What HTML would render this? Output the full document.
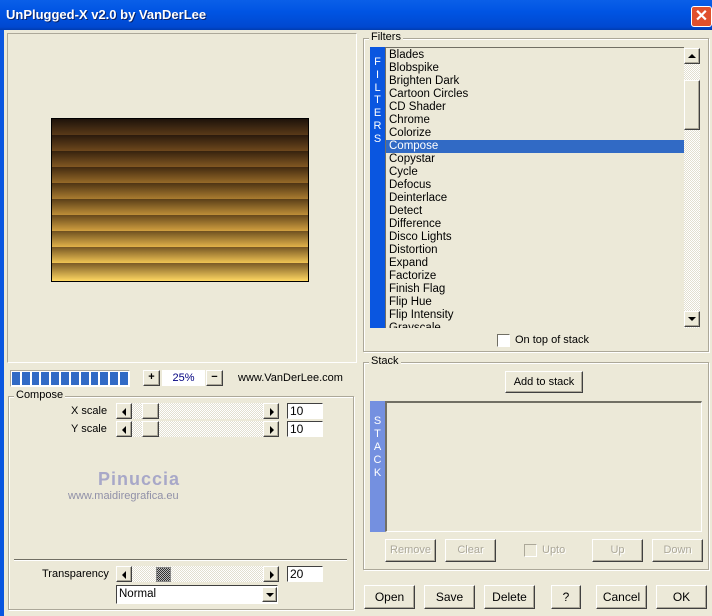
<!DOCTYPE html>
<html><head><meta charset="utf-8"><style>
*{margin:0;padding:0;box-sizing:border-box}
body{width:712px;height:616px;background:#ece9d8;font:11px "Liberation Sans",sans-serif;color:#000;position:relative;overflow:hidden}
.a{position:absolute}
.title{left:0;top:0;width:712px;height:30px;background:linear-gradient(#0a5fe8,#0054e3 40%,#0048d0 90%,#003cb0);}
.title span{position:absolute;left:6px;top:7px;color:#fff;font-weight:bold;font-size:13px;text-shadow:1px 1px #0a246a}
.close{left:691px;top:6px;width:21px;height:21px;background:#e0502c;border:1px solid #fff;border-radius:3px;color:#fff;font-size:16px;font-weight:bold;text-align:center;line-height:19px}
.edge{left:0;top:30px;width:4px;height:586px;background:#0a56e0}
.sunk{border:1px solid;border-color:#aca899 #fff #fff #aca899}
.grp{border:1px solid #aca899;box-shadow:inset 1px 1px #fff,1px 1px #fff}
.legend{background:#ece9d8;padding:0 2px}
.btn{background:#ece9d8;border:1px solid;border-color:#fff #404040 #404040 #fff;box-shadow:inset -1px -1px #aca899;text-align:center}
.dis{color:#aca899;text-shadow:1px 1px #fff}
.track{background:repeating-conic-gradient(#fff 0 25%,#e2dfd0 0 50%) 0 0/2px 2px}
.inp{background:#fff;border:1px solid;border-color:#404040 #fff #fff #404040;padding-left:2px;line-height:14px;font-size:12px}
.tri{width:0;height:0;border-style:solid;position:absolute}
.list div{height:13px;line-height:13px;padding-left:3px;font-size:11.5px}
</style></head><body>
<div class="a title"><span>UnPlugged-X v2.0 by VanDerLee</span></div>
<div class="a close">✕</div>
<div class="a edge"></div>

<!-- preview -->
<div class="a sunk" style="left:7px;top:33px;width:350px;height:330px;background:#ece9d8"></div>
<div class="a" style="left:51px;top:118px;width:258px;height:164px;border:1px solid #000;background:#000">
<div style="height:16px;background:linear-gradient(#1e130a,#5a3a18)"></div>
<div style="height:16px;background:linear-gradient(#2a1a0c,#6e481c)"></div>
<div style="height:16px;background:linear-gradient(#36220e,#825822)"></div>
<div style="height:16px;background:linear-gradient(#422a10,#966a28)"></div>
<div style="height:16px;background:linear-gradient(#4e3414,#aa7c30)"></div>
<div style="height:16px;background:linear-gradient(#5a3e18,#be8e38)"></div>
<div style="height:16px;background:linear-gradient(#66481c,#d2a040)"></div>
<div style="height:16px;background:linear-gradient(#6e5020,#e2b24a)"></div>
<div style="height:16px;background:linear-gradient(#765624,#f0c454)"></div>
<div style="height:18px;background:linear-gradient(#7a5a26,#ffd862)"></div>
</div>

<!-- progress / zoom -->
<div class="a sunk" style="left:10px;top:370px;width:120px;height:17px;background:#fff;padding:1px;display:flex;gap:2px">
<div style="flex:1;background:#316ac5"></div><div style="flex:1;background:#316ac5"></div><div style="flex:1;background:#316ac5"></div><div style="flex:1;background:#316ac5"></div><div style="flex:1;background:#316ac5"></div><div style="flex:1;background:#316ac5"></div><div style="flex:1;background:#316ac5"></div><div style="flex:1;background:#316ac5"></div><div style="flex:1;background:#316ac5"></div><div style="flex:1;background:#316ac5"></div><div style="flex:1;background:#316ac5"></div><div style="flex:1;background:#316ac5"></div>
</div>
<div class="a btn" style="left:143px;top:370px;width:17px;height:16px;line-height:13px;font-weight:bold">+</div>
<div class="a" style="left:162px;top:370px;width:43px;height:16px;background:#fff;color:#000080;text-align:center;line-height:16px">25%</div>
<div class="a btn" style="left:206px;top:370px;width:17px;height:16px;line-height:13px;font-weight:bold">−</div>
<div class="a" style="left:238px;top:372px">www.VanDerLee.com</div>

<!-- compose group -->
<div class="a grp" style="left:8px;top:396px;width:346px;height:214px"></div>
<div class="a legend" style="left:14px;top:389px">Compose</div>
<div class="a" style="left:71px;top:405px">X scale</div>
<div class="a" style="left:71px;top:423px">Y scale</div>
<div class="a" style="left:42px;top:568px">Transparency</div>

<div class="a track" style="left:116px;top:403px;width:163px;height:16px"></div>
<div class="a btn" style="left:116px;top:403px;width:16px;height:16px"><div class="tri" style="left:5px;top:4px;border-width:4px 4px 4px 0;border-color:transparent #000 transparent transparent"></div></div>
<div class="a btn" style="left:142px;top:403px;width:17px;height:16px"></div>
<div class="a btn" style="left:263px;top:403px;width:16px;height:16px"><div class="tri" style="left:6px;top:4px;border-width:4px 0 4px 4px;border-color:transparent transparent transparent #000"></div></div>
<div class="a inp" style="left:287px;top:403px;width:36px;height:16px">10</div>

<div class="a track" style="left:116px;top:421px;width:163px;height:16px"></div>
<div class="a btn" style="left:116px;top:421px;width:16px;height:16px"><div class="tri" style="left:5px;top:4px;border-width:4px 4px 4px 0;border-color:transparent #000 transparent transparent"></div></div>
<div class="a btn" style="left:142px;top:421px;width:17px;height:16px"></div>
<div class="a btn" style="left:263px;top:421px;width:16px;height:16px"><div class="tri" style="left:6px;top:4px;border-width:4px 0 4px 4px;border-color:transparent transparent transparent #000"></div></div>
<div class="a inp" style="left:287px;top:421px;width:36px;height:16px">10</div>

<div class="a" style="left:98px;top:469px;font-size:18px;font-weight:bold;color:#a8a8c8;letter-spacing:1px">Pinuccia</div>
<div class="a" style="left:68px;top:490px;font-size:11px;color:#9090a8">www.maidiregrafica.eu</div>

<div class="a" style="left:14px;top:559px;width:333px;height:2px;background:#716f64;border-bottom:1px solid #fff"></div>

<div class="a track" style="left:116px;top:566px;width:163px;height:16px"></div>
<div class="a btn" style="left:116px;top:566px;width:16px;height:16px"><div class="tri" style="left:5px;top:4px;border-width:4px 4px 4px 0;border-color:transparent #000 transparent transparent"></div></div>
<div class="a" style="left:156px;top:567px;width:15px;height:15px;border:1px solid #888;background:repeating-conic-gradient(#333 0 25%,#bbb 0 50%) 0 0/2px 2px"></div>
<div class="a btn" style="left:263px;top:566px;width:16px;height:16px"><div class="tri" style="left:6px;top:4px;border-width:4px 0 4px 4px;border-color:transparent transparent transparent #000"></div></div>
<div class="a inp" style="left:287px;top:566px;width:36px;height:16px">20</div>

<div class="a inp" style="left:116px;top:585px;width:162px;height:19px;line-height:17px;font-size:11.5px">Normal</div>
<div class="a btn" style="left:262px;top:587px;width:15px;height:15px"><div class="tri" style="left:3px;top:5px;border-width:4px 4px 0 4px;border-color:#000 transparent transparent transparent"></div></div>

<!-- Filters group -->
<div class="a grp" style="left:363px;top:38px;width:346px;height:314px"></div>
<div class="a legend" style="left:369px;top:31px">Filters</div>
<div class="a" style="left:370px;top:47px;width:15px;height:281px;background:#0a56e0;color:#fff;text-align:center;font-size:11px;line-height:12.8px;padding-top:9px">F<br>I<br>L<br>T<br>E<br>R<br>S</div>
<div class="a list" style="left:385px;top:47px;width:299px;height:281px;overflow:hidden;border-top:1px solid #716f64;border-left:1px solid #716f64;padding-top:1px">
<div>Blades</div><div>Blobspike</div><div>Brighten Dark</div><div>Cartoon Circles</div><div>CD Shader</div><div>Chrome</div><div>Colorize</div><div style="background:#316ac5;color:#fff">Compose</div><div>Copystar</div><div>Cycle</div><div>Defocus</div><div>Deinterlace</div><div>Detect</div><div>Difference</div><div>Disco Lights</div><div>Distortion</div><div>Expand</div><div>Factorize</div><div>Finish Flag</div><div>Flip Hue</div><div>Flip Intensity</div><div>Grayscale</div>
</div>
<div class="a track" style="left:684px;top:48px;width:16px;height:280px"></div>
<div class="a btn" style="left:684px;top:48px;width:16px;height:16px"><div class="tri" style="left:3px;top:5px;border-width:0 4px 4px 4px;border-color:transparent transparent #000 transparent"></div></div>
<div class="a btn" style="left:684px;top:80px;width:16px;height:50px"></div>
<div class="a btn" style="left:684px;top:311px;width:16px;height:16px"><div class="tri" style="left:3px;top:5px;border-width:4px 4px 0 4px;border-color:#000 transparent transparent transparent"></div></div>
<div class="a" style="left:497px;top:334px;width:13px;height:13px;background:#fff;border:1px solid;border-color:#716f64 #fff #fff #716f64"></div>
<div class="a" style="left:515px;top:334px">On top of stack</div>

<!-- Stack group -->
<div class="a grp" style="left:363px;top:362px;width:346px;height:208px"></div>
<div class="a legend" style="left:369px;top:355px">Stack</div>
<div class="a btn" style="left:505px;top:371px;width:78px;height:22px;line-height:20px">Add to stack</div>
<div class="a" style="left:370px;top:401px;width:15px;height:131px;background:#7490e0;color:#fff;text-align:center;line-height:13px;padding-top:14px;font-size:11px">S<br>T<br>A<br>C<br>K</div>
<div class="a" style="left:385px;top:401px;width:317px;height:131px;border-top:2px solid #716f64;border-left:2px solid #716f64;border-right:1px solid #fff;border-bottom:1px solid #fff"></div>
<div class="a btn dis" style="left:385px;top:539px;width:51px;height:23px;line-height:21px">Remove</div>
<div class="a btn dis" style="left:445px;top:539px;width:51px;height:23px;line-height:21px">Clear</div>
<div class="a" style="left:524px;top:544px;width:13px;height:13px;border:1px solid;border-color:#aca899 #fff #fff #aca899"></div>
<div class="a dis" style="left:542px;top:544px">Upto</div>
<div class="a btn dis" style="left:592px;top:539px;width:51px;height:23px;line-height:21px">Up</div>
<div class="a btn dis" style="left:652px;top:539px;width:51px;height:23px;line-height:21px">Down</div>

<!-- bottom buttons -->
<div class="a btn" style="left:364px;top:585px;width:51px;height:24px;line-height:22px;font-size:12px">Open</div>
<div class="a btn" style="left:424px;top:585px;width:51px;height:24px;line-height:22px;font-size:12px">Save</div>
<div class="a btn" style="left:484px;top:585px;width:51px;height:24px;line-height:22px;font-size:12px">Delete</div>
<div class="a btn" style="left:551px;top:585px;width:30px;height:24px;line-height:22px;font-size:12px">?</div>
<div class="a btn" style="left:596px;top:585px;width:51px;height:24px;line-height:22px;font-size:12px">Cancel</div>
<div class="a btn" style="left:656px;top:585px;width:51px;height:24px;line-height:22px;font-size:12px">OK</div>
</body></html>
